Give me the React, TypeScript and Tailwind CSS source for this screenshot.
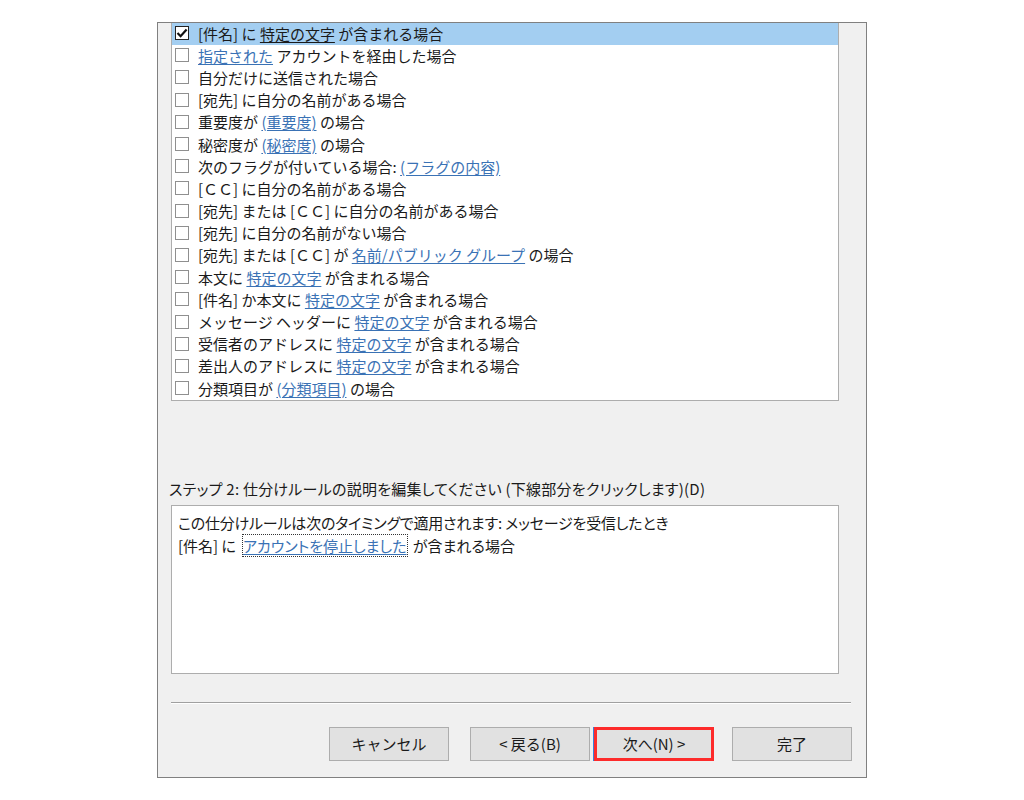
import React from "react";

type Part = { t: string; link?: boolean; wide?: boolean };
type Rule = { parts: Part[]; checked?: boolean };

const cc: Part = { t: "[ＣＣ]", wide: true };

const rules: Rule[] = [
  { checked: true, parts: [{ t: "[件名] に " }, { t: "特定の文字", link: true }, { t: " が含まれる場合" }] },
  { parts: [{ t: "指定された", link: true }, { t: " アカウントを経由した場合" }] },
  { parts: [{ t: "自分だけに送信された場合" }] },
  { parts: [{ t: "[宛先] に自分の名前がある場合" }] },
  { parts: [{ t: "重要度が " }, { t: "(重要度)", link: true }, { t: " の場合" }] },
  { parts: [{ t: "秘密度が " }, { t: "(秘密度)", link: true }, { t: " の場合" }] },
  { parts: [{ t: "次のフラグが付いている場合: " }, { t: "(フラグの内容)", link: true }] },
  { parts: [cc, { t: " に自分の名前がある場合" }] },
  { parts: [{ t: "[宛先] または " }, cc, { t: " に自分の名前がある場合" }] },
  { parts: [{ t: "[宛先] に自分の名前がない場合" }] },
  { parts: [{ t: "[宛先] または " }, cc, { t: " が " }, { t: "名前/パブリック グループ", link: true }, { t: " の場合" }] },
  { parts: [{ t: "本文に " }, { t: "特定の文字", link: true }, { t: " が含まれる場合" }] },
  { parts: [{ t: "[件名] か本文に " }, { t: "特定の文字", link: true }, { t: " が含まれる場合" }] },
  { parts: [{ t: "メッセージ ヘッダーに " }, { t: "特定の文字", link: true }, { t: " が含まれる場合" }] },
  { parts: [{ t: "受信者のアドレスに " }, { t: "特定の文字", link: true }, { t: " が含まれる場合" }] },
  { parts: [{ t: "差出人のアドレスに " }, { t: "特定の文字", link: true }, { t: " が含まれる場合" }] },
  { parts: [{ t: "分類項目が " }, { t: "(分類項目)", link: true }, { t: " の場合" }] },
];

function CheckBox({ checked }: { checked?: boolean }) {
  return (
    <span className={`w-[14px] h-[14px] border bg-white flex items-center justify-center shrink-0 ${checked ? "border-[#222]" : "border-[#8f8f8f]"}`}>
      {checked && (
        <svg width="12" height="12" viewBox="0 0 12 12">
          <path d="M1.5 6 L4.6 9.2 L10.6 2.4" fill="none" stroke="#111" strokeWidth="2.2" />
        </svg>
      )}
    </span>
  );
}

function WinButton({ label, focus }: { label: string; focus?: boolean }) {
  return (
    <button
      className={`h-[34px] w-[120px] bg-[#e1e1e1] text-[15px] text-[#1a1a1a] flex items-center justify-center ${
        focus ? "border-[3px] border-[#fd2b2b] shadow-[-1px_0_0_#3b80d8]" : "border border-[#adadad]"
      }`}
    >
      {label}
    </button>
  );
}

export default function App() {
  return (
    <div
      className="w-[1024px] h-[800px] bg-white pt-[22px] pl-[157px] text-[#1a1a1a]"
      style={{ fontFamily: '"Noto Sans CJK JP", "Noto Sans", sans-serif' }}
    >
      <div className="w-[710px] h-[756px] border border-[#808080] bg-[#f0f0f0] flex flex-col">
        {/* condition list */}
        <div className="ml-[13px] w-[668px] h-[378px] border border-t-0 border-[#adadad] bg-white overflow-hidden">
          {rules.map((r, i) => (
            <div
              key={i}
              className={`h-[22.2px] flex items-center pl-[3px] pb-[2px] gap-[9px] text-[15px] leading-none whitespace-pre ${r.checked ? "bg-[#a3cef1]" : ""}`}
            >
              <CheckBox checked={r.checked} />
              <span>
                {r.parts.map((p, j) =>
                  p.link ? (
                    <span key={j} className={`underline underline-offset-2 ${r.checked ? "text-[#1a1a1a]" : "text-[#3a72b5]"}`}>
                      {p.t}
                    </span>
                  ) : (
                    <span key={j}>{p.t}</span>
                  )
                )}
              </span>
            </div>
          ))}
        </div>

        <div className="mt-[79px] pl-[11px] text-[15px] leading-[18px] tracking-[0.25px] [font-feature-settings:'palt']">
          ステップ 2: 仕分けルールの説明を編集してください (下線部分をクリックします)(D)
        </div>

        {/* rule description */}
        <div className="ml-[13px] mt-[7px] w-[668px] h-[169px] border border-[#adadad] bg-white px-[6px] pt-[5px] text-[15px] leading-[23px] [font-feature-settings:'palt']">
          <div className="tracking-[-0.2px]">この仕分けルールは次のタイミングで適用されます: メッセージを受信したとき</div>
          <div className="whitespace-pre">
            [件名] に
            <span className="ml-[7px] mr-[3px] outline outline-1 outline-dotted outline-[#333] text-[#3a72b5] underline underline-offset-2">
              アカウントを停止しました
            </span>{" "}
            が含まれる場合
          </div>
        </div>

        <div className="ml-[13px] mt-[28px] w-[680px] border-t border-[#a0a0a0] border-b border-b-white" />

        <div className="mt-[23px] flex pl-[171px]">
          <WinButton label="キャンセル" />
          <div className="ml-[21px]">
            <WinButton label="< 戻る(B)" />
          </div>
          <div className="ml-[4px]">
            <WinButton label="次へ(N) >" focus />
          </div>
          <div className="ml-[18px]">
            <WinButton label="完了" />
          </div>
        </div>
      </div>
    </div>
  );
}
